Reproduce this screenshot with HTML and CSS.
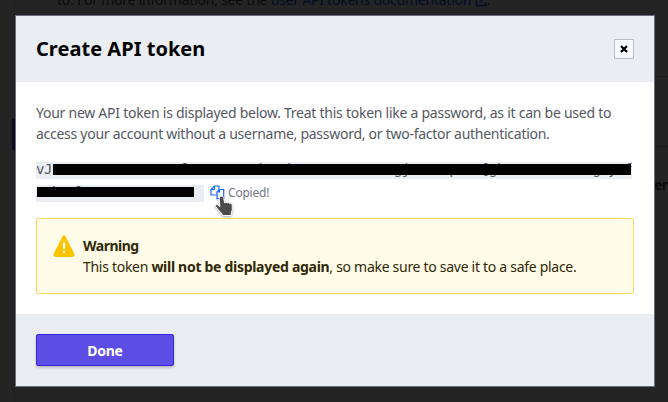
FILE: index.html
```html
<!DOCTYPE html>
<html lang="en">
<head>
<meta charset="utf-8">
<title>Create API token</title>
<link rel="stylesheet" href="styles.css">
</head>
<body>
<div class="page">
  <div class="page-panel"></div>
  <div class="page-text">to. For more information, see the <span class="page-link">user API tokens documentation <svg width="12" height="12" viewBox="0 0 12 12"><path d="M5 1.5H1.5v9h9V7M7 1h4v4M11 1L5 7" fill="none" stroke="currentColor" stroke-width="1.4"/></svg></span>.</div>
  <div class="page-tab"></div>
  <div class="page-row"></div>
  <div class="page-cell">erc</div>
</div>
<main class="modal">
  <header class="modal-header">
    <h1>Create API token</h1>
    <button class="close" aria-label="Close"><svg width="8" height="8" viewBox="0 0 8 8"><path d="M1 1L7 7M7 1L1 7" stroke="#000" stroke-width="2.3"/></svg></button>
  </header>
  <section class="modal-body">
    <p class="intro"><span class="intro-a">Your new API token is displayed below. Treat this token like a password, as it can be used to</span><br><span class="intro-b">access your account without a username, password, or two-factor authentication.</span></p>
    <div class="token">
      <code class="code code-first">vJxxxxxxxxxxxxxxxxfxxxxxxxxxbxxdxxxxxxxxxxxxxgjxxxxxpxxx[gbxxxxxxxxxxxgxyxf<span class="redact"></span></code>
    </div>
    <div class="token token-second">
      <code class="code code-second">xxbxxlxxxxxxxxxxxxx<span class="redact"></span></code>
      <svg class="copy" width="15" height="15" viewBox="0 0 15 15"><path d="M4.5 1H9v9H1V4.5zM4.5 1v3.5H1" /><path class="copy-front" d="M9.5 4.5h4.2v9.2H7V7zM9.5 4.5V7H7"/></svg>
      <span class="copied">Copied!</span>
      <svg class="cursor" width="22" height="25" viewBox="0 0 22 25"><path d="M7.5 1.2c1.5 0 2.1.9 2.3 2.2l.8 4.5c.8-.8 2-.8 2.6.1.9-.8 2.1-.5 2.5.5 1.3-.7 2.5.2 2.5 1.7l.1 4.5-1 3.2v2.6H8.2v-1.5L4.4 15l-2.7-3.5c-.9-1.8 1-2.8 2.2-1.6l2 1.7L5.2 4C5 2.3 6 1.2 7.5 1.2z"/></svg>
    </div>
    <div class="warning">
      <svg width="22" height="22" viewBox="0 0 22 22"><path d="M9.4 1.4Q11 -.9 12.6 1.4L21.2 18.4Q22.5 21.6 19.5 22H2.5Q-.5 21.6.8 18.4z" fill="#fdc500"/><path d="M11 7.5v6.2M11 15.8v2.2" stroke="#fff" stroke-width="2.2"/></svg>
      <div class="warning-text"><strong class="warning-title">Warning</strong><br>This token <strong>will not be displayed again</strong>, so make sure to save it to a safe place.</div>
    </div>
  </section>
  <footer class="modal-footer"><button class="done">Done</button></footer>
</main>
</body>
</html>
```
FILE: styles.css
```css
* { box-sizing: border-box; }
body {
  margin: 0;
  width: 668px;
  height: 402px;
  overflow: hidden;
  position: relative;
  padding: 15px 13px 15px 15px;
  background: #242424;
  font-family: "Noto Sans", "Open Sans", sans-serif;
  font-size: 14px;
  color: #545861;
}
button { font: inherit; padding: 0; }
.page { position: absolute; inset: 0; color: #090909; overflow: hidden; }
.page-panel { position: absolute; left: 14px; top: 0; width: 1px; height: 402px; background: #1e1e1e; }
.page-text { position: absolute; left: 57px; top: -11px; font-size: 14px; line-height: 21px; letter-spacing: -0.23px; white-space: nowrap; }
.page-link { color: #020b25; }
.page-link svg { vertical-align: -2px; }
.page-tab { position: absolute; left: 12px; top: 119px; width: 3px; height: 31px; background: #0e0b24; }
.page-row { position: absolute; left: 654px; top: 76px; width: 14px; height: 71px; border: solid #1b1b1b; border-width: 1px 0; }
.page-cell { position: absolute; left: 654px; top: 175px; font-size: 14px; font-weight: 700; letter-spacing: -0.5px; }
.modal {
  position: relative;
  display: flex;
  flex-direction: column;
  width: 640px;
  height: 372px;
  border: 1px solid #6a6e7c;
  background: #fff;
}
.modal-header {
  display: flex;
  align-items: center;
  justify-content: space-between;
  height: 66px;
  padding: 0 20px;
  background: #eaedf2;
}
h1 { margin: 0; color: #000; font-size: 20px; line-height: 28px; letter-spacing: 0.03px; white-space: nowrap; }
.close {
  display: flex;
  align-items: center;
  justify-content: center;
  width: 20px;
  height: 20px;
  border: 1px solid #b8bdca;
  background: #f9fafb;
}
.modal-body { flex: 1; padding: 20px 20px 0; }
.intro { margin: 0 0 18px; line-height: 21px; white-space: nowrap; }
.intro-a { letter-spacing: -0.257px; }
.intro-b { letter-spacing: -0.27px; }
.token { display: flex; height: 17px; margin-bottom: 6px; }
.token-second { position: relative; margin-bottom: 16px; }
.code {
  position: relative;
  width: 596px;
  height: 17px;
  background: #eaedf2;
  font: 14px/15px "DejaVu Sans Mono", monospace;
  letter-spacing: -0.48px;
  white-space: nowrap;
}
.code-second { width: 168px; line-height: 14px; }
.redact { position: absolute; left: 17px; top: 2px; width: 578px; height: 11px; background: #000; }
.code-second .redact { left: 1px; width: 157px; height: 10px; }
.copy { margin-left: 6px; fill: none; stroke: #1769ff; stroke-width: 1.2; }
.copy-front { fill: #fff; }
.copied { margin-left: 3px; color: #727681; font-size: 12px; line-height: 16px; letter-spacing: -0.2px; }
.cursor { position: absolute; left: 178px; top: 10px; z-index: 1; fill: #4b4b4b; stroke: #fff; stroke-width: 1; filter: drop-shadow(0 1px 1px #0005); }
.warning {
  display: flex;
  gap: 8px;
  width: 598px;
  height: 76px;
  padding: 16px;
  border: 1px solid #ffd95a;
  border-radius: 2px;
  background: #fffbe9;
  color: #302806;
}
.warning > svg { flex: none; margin-top: 0; }
.warning-text { line-height: 21px; letter-spacing: -0.29px; white-space: nowrap; }
.warning-title { letter-spacing: -0.5px; }
.modal-footer { height: 72px; padding: 20px; background: #eaedf2; }
.done {
  display: block;
  width: 138px;
  height: 32px;
  border: 1px solid #3525db;
  border-radius: 2px;
  background: #5c4ee5;
  box-shadow: 0 2px 3px #0003;
  color: #fff;
  font-weight: 700;
  letter-spacing: -0.3px;
}
```
